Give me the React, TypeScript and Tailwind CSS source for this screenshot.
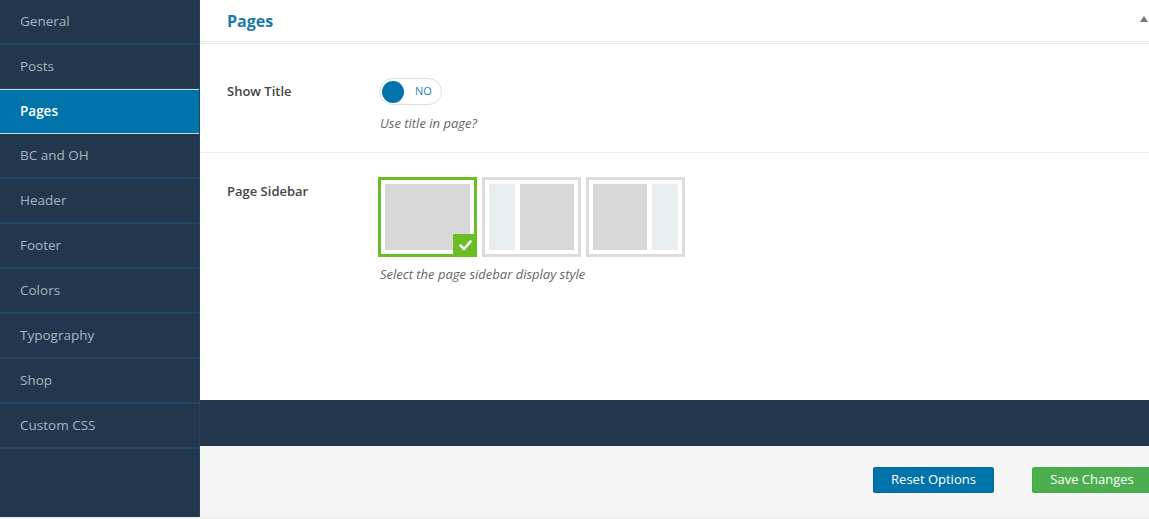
import React, { useState } from "react";

const menu = [
  "General",
  "Posts",
  "Pages",
  "BC and OH",
  "Header",
  "Footer",
  "Colors",
  "Typography",
  "Shop",
  "Custom CSS",
];

// one of the three sidebar layout thumbnails
const LayoutOption = ({
  kind,
  selected,
  onClick,
}: {
  kind: "none" | "left" | "right";
  selected: boolean;
  onClick: () => void;
}) => (
  <div
    onClick={onClick}
    className={`relative w-[99px] h-[80px] border-[3px] p-[4px] flex gap-[5px] cursor-pointer bg-white ${
      selected ? "border-[#6bbd24]" : "border-[#dcdcdc]"
    }`}
  >
    {kind === "left" && <div className="w-[26px] h-full bg-[#e8edf0]" />}
    <div className="flex-1 h-full bg-[#d8d8d8]" />
    {kind === "right" && <div className="w-[26px] h-full bg-[#e8edf0]" />}
    {selected && (
      <div className="absolute -right-[3px] -bottom-[3px] w-[24px] h-[23px] bg-[#6bbd24] flex items-center justify-center">
        <svg width="13" height="11" viewBox="0 0 13 11">
          <polyline
            points="1.5,5.5 5,9 11.5,1.5"
            fill="none"
            stroke="white"
            strokeWidth="2.6"
            strokeLinecap="round"
            strokeLinejoin="round"
          />
        </svg>
      </div>
    )}
  </div>
);

export default function App() {
  const [active, setActive] = useState("Pages");
  const [layout, setLayout] = useState<"none" | "left" | "right">("none");
  const [showTitle, setShowTitle] = useState(false);

  return (
    <div
      className="w-[1149px] h-[519px] overflow-hidden flex flex-col bg-[#eeeeee]"
      style={{ fontFamily: "'Open Sans', 'Noto Sans', sans-serif" }}
    >
      <div className="flex h-[517px]">
        {/* left menu */}
        <div className="w-[200px] shrink-0 bg-[#22374e] border-r border-[#1f4563] flex flex-col">
          {menu.map((item) => (
            <div
              key={item}
              onClick={() => setActive(item)}
              className={`h-[45px] shrink-0 flex items-center pl-[20px] text-[13.5px] cursor-pointer ${
                active === item
                  ? "relative -mt-[1px] bg-[#0073aa] text-white font-semibold border-y border-[#c9d3db]"
                  : "text-[#a8b3be] border-b-2 border-[#1f4866]"
              }`}
            >
              {item}
            </div>
          ))}
        </div>

        {/* content */}
        <div className="flex-1 flex flex-col min-w-0">
          <div className="bg-white h-[400px] flex flex-col">
            <div className="h-[41px] flex items-center justify-between pl-[27px]">
              <h2 className="text-[16px] font-bold text-[#1a7aa8]">Pages</h2>
              <div className="w-0 h-0 border-l-[4px] border-r-[4px] border-b-[6px] border-l-transparent border-r-transparent border-b-[#72777c] mr-[1px] -mt-[3px]" />
            </div>
            <div className="h-px bg-[#e5e5e5]" />
            <div className="h-px" />
            <div className="h-px bg-[#e8e8e8]" />

            {/* show title */}
            <div className="flex pl-[27px] pt-[34px] h-[109px] border-b border-[#eeeeee]">
              <div className="w-[152px] text-[13px] font-semibold text-[#444] pt-[4px]">
                Show Title
              </div>
              <div className="flex flex-col">
                <div
                  onClick={() => setShowTitle(!showTitle)}
                  className="w-[63px] h-[27px] rounded-full border border-[#dddddd] flex items-center pl-[2px] gap-[11px] cursor-pointer bg-white"
                >
                  <div className="w-[22px] h-[22px] rounded-full bg-[#0073aa]" />
                  <span className="text-[11px] text-[#2a80b0]">{showTitle ? "YES" : "NO"}</span>
                </div>
                <p className="text-[13px] italic text-[#666] mt-[9px] ml-[1px]">Use title in page?</p>
              </div>
            </div>

            {/* page sidebar */}
            <div className="flex pl-[27px] pt-[24px]">
              <div className="w-[151px] text-[13px] font-semibold text-[#444] pt-[5px]">
                Page Sidebar
              </div>
              <div className="flex flex-col">
                <div className="flex gap-[5px]">
                  <LayoutOption kind="none" selected={layout === "none"} onClick={() => setLayout("none")} />
                  <LayoutOption kind="left" selected={layout === "left"} onClick={() => setLayout("left")} />
                  <LayoutOption kind="right" selected={layout === "right"} onClick={() => setLayout("right")} />
                </div>
                <p className="text-[13px] italic text-[#666] mt-[8px] ml-[2px]">
                  Select the page sidebar display style
                </p>
              </div>
            </div>
          </div>

          <div className="h-[46px] bg-[#22374e]" />

          <div className="flex-1 bg-[#f5f5f5] flex items-start justify-end pt-[21px]">
            <button className="w-[121px] h-[26px] bg-[#0073aa] text-white text-[13px] rounded-[2px] border border-[#006799]">
              Reset Options
            </button>
            <button className="w-[120px] h-[26px] ml-[38px] -mr-[3px] bg-[#4cae4f] text-white text-[13px] rounded-[2px] border border-[#46a449]">
              Save Changes
            </button>
          </div>
        </div>
      </div>
    </div>
  );
}
